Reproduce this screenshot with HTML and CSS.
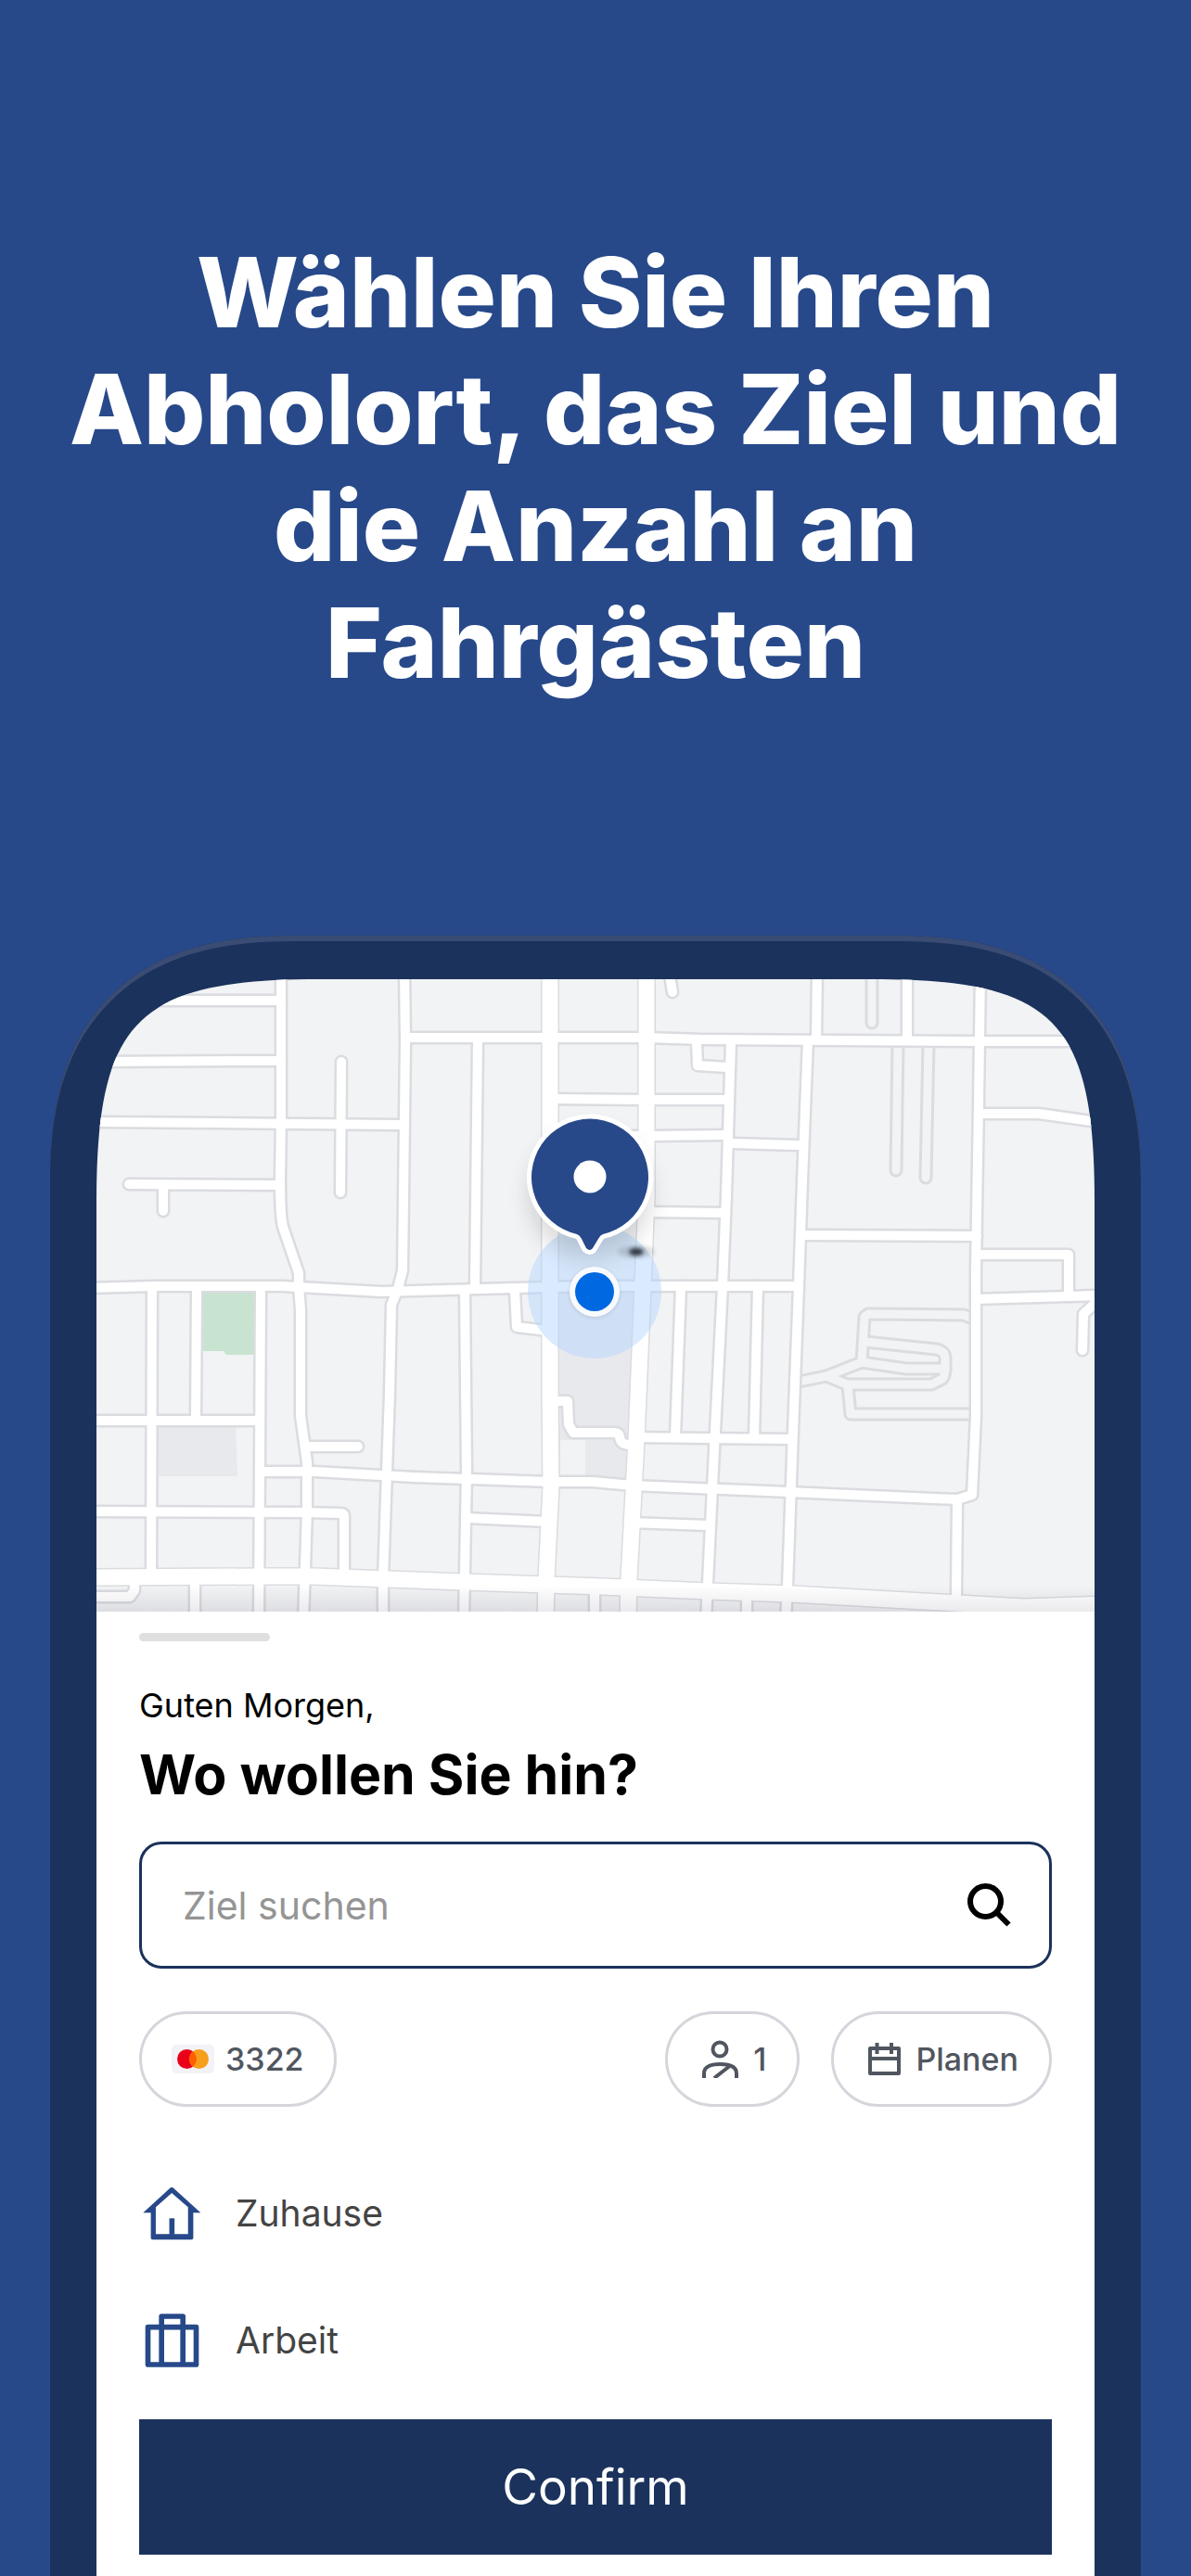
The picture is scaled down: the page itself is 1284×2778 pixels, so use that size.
FILE: index.html
```html
<!DOCTYPE html>
<html lang="de">
<head>
  <meta charset="utf-8">
  <meta name="viewport" content="width=device-width, initial-scale=1">
  <title>Wo wollen Sie hin?</title>
  <link rel="stylesheet" href="styles.css">
</head>
<body>
  <header class="hero">
    <h1 class="hero-title">Wählen Sie Ihren Abholort, das Ziel und die Anzahl an Fahrgästen</h1>
  </header>

  <main class="phone">
    <svg class="map" viewBox="0 0 1076 682" role="img" aria-label="Karte">
      <defs>
        <clipPath id="screen">
          <path d="M0 682V240C0 44 44 0 240 0H836C1032 0 1076 44 1076 240V682Z"/>
        </clipPath>
        <filter id="soft" x="-50%" y="-50%" width="200%" height="200%">
          <feGaussianBlur stdDeviation="2"/>
        </filter>
        <filter id="softer" x="-50%" y="-50%" width="200%" height="200%">
          <feGaussianBlur stdDeviation="12"/>
        </filter>
        <linearGradient id="edge" x1="0" y1="0" x2="0" y2="1">
          <stop offset="0" stop-color="#302040" stop-opacity="0"/>
          <stop offset="1" stop-color="#302040" stop-opacity=".1"/>
        </linearGradient>

        <!-- side streets -->
        <g id="streets">
          <path d="M199 -10V147L198 217Q198 255 201 267L218 317L218 331L220 357V471L227 521V571L225 634L223 692"/>
          <path d="M332 -10L333 67L331 234L330 314L325 334L318 351L316 447L313 531L309 647V692"/>
          <path d="M411 64L408 332M397 336L399 531L396 692"/>
          <path d="M684 67L679 234L675 331L665 527L659 651L657 692"/>
          <path d="M777 -10L776 66M767 66L761 217L757 331L750 514L745 654L743 692"/>
          <path d="M874 -10V64"/>
          <path d="M953 -10L951 134L948 314V471L944 556L928 561L927 664"/>
          <path d="M60 334L59 640M108 334L107 474M177 334L176 514L175 692M106 654V692"/>
          <path d="M-10 23H198M-10 89L149 88H198M-10 154L133 155L327 157"/>
          <path d="M333 63H489L593 63L654 65L955 67H1080"/>
          <path d="M489 129L593 130H681M489 169H593L676 168M686 177L757 179M593 251L678 252"/>
          <path d="M264 89L263 230M35 221L198 222M72 222V250"/>
          <path d="M647 67L648 93L680 95M617 -10L621 14"/>
          <path d="M761 276L949 277M951 145H1016L1080 154M951 297H1048V342"/>
          <path d="M-10 333L64 331H200L307 337L414 334L489 332L535 331H750"/>
          <path d="M948 345L1048 342L1080 341M1076 350L1064 361L1063 400"/>
          <path d="M630 331L624 494M713 331L709 494M582 494L750 496"/>
          <path d="M178 531H235L343 537L489 542H535L578 546L746 553L928 561"/>
          <path d="M575 586L660 589M451 336L453 375L486 379"/>
          <path d="M-10 476H173M228 504H282"/>
          <path d="M-10 574L225 575L264 576Q267 576 267 579V636M398 581L486 585"/>
          <path d="M496 455H508L509 480L514 489H558Q564 489 564 494Q565 502 575 502"/>
          <path d="M-10 666H36L41 659V650M537 660V692M701 664V692"/>
        </g>
        <!-- lanes drawn only as outlines -->
        <g id="lanes">
          <path d="M836 -10V47M864 69L862 206M897 69L894 214"/>
          <path d="M757 434L787 428L825 413L828 364L832 361L935 362L945 366"/>
          <path d="M829 391L905 399Q916 401 915 411V421Q914 430 912 431L900 437H809L787 428"/>
          <path d="M825 413L873 420H915M810 439L813 469H945"/>
        </g>
        <!-- main roads -->
        <g id="avenues">
          <path d="M489 -10V447L490 547L485 647L484 692"/>
          <path d="M593 -10V234L589 331L582 497L574 647L573 692"/>
          <path d="M-10 645L175 644H235L396 650L545 655L659 660L750 663L928 673L1000 677L1090 674"/>
        </g>
      </defs>

      <g clip-path="url(#screen)">
        <rect class="land" width="1076" height="682"/>
        <path class="park" d="M114 336H172L170 405H140L137 401H114Z"/>
        <path class="block" d="M67 482H150L152 536H67Z"/>
        <path class="block" d="M498 334H584L578 546L498 538Z"/>
        <path class="land" d="M500 497H527V536H500Z"/>

        <use href="#lanes" class="road lane-edge"/>
        <use href="#lanes" class="road lane-fill"/>
        <use href="#streets" class="road street-edge"/>
        <use href="#avenues" class="road avenue-edge"/>
        <use href="#streets" class="road street-fill"/>
        <use href="#avenues" class="road avenue-fill"/>

        <circle class="halo" cx="537" cy="337" r="72"/>
        <ellipse cx="532" cy="232" rx="66" ry="68" fill="#000" opacity=".14" filter="url(#softer)"/>
        <ellipse cx="582" cy="294" rx="20" ry="7" fill="#000" opacity=".12" filter="url(#soft)"/>
        <ellipse cx="582" cy="294" rx="8" ry="4" fill="#22262e" opacity=".9" filter="url(#soft)"/>
        <circle cx="537" cy="338" r="27" fill="#000" opacity=".12" filter="url(#soft)"/>
        <circle cx="537" cy="337" r="27" fill="#f8fafd"/>
        <circle cx="537" cy="337" r="21" fill="#0068e1"/>
        <path class="pin" d="M518 275A63 63 0 1 1 546 275Q543 276 541 280L535 290Q532 294 528 290L523 280Q521 276 518 275Z"/>
        <circle cx="532" cy="213" r="17.500" fill="#fff"/>
        <rect y="654" width="1076" height="28" fill="url(#edge)"/>
      </g>
    </svg>

    <section class="sheet">
      <div class="handle"></div>
      <p class="greeting">Guten Morgen,</p>
      <h2 class="question">Wo wollen Sie hin?</h2>

      <form class="search">
        <input class="search-input" type="text" placeholder="Ziel suchen" aria-label="Ziel suchen">
        <button class="search-button" type="button" aria-label="Suchen">
          <svg width="47" height="47" viewBox="0 0 47 47" fill="none" stroke="#000" stroke-width="6">
            <circle cx="19.500" cy="19.500" r="16.500"/>
            <path d="M31 31L44.500 44.500"/>
          </svg>
        </button>
      </form>

      <div class="chips">
        <button class="chip chip-card" type="button">
          <svg width="46" height="31" viewBox="0 0 46 31">
            <rect width="46" height="31" rx="5" fill="#f2f3f6"/>
            <circle cx="16.500" cy="15.500" r="10.500" fill="#eb001b"/>
            <circle cx="29.500" cy="15.500" r="10.500" fill="#f79e1b"/>
            <path d="M23 7.300A10.500 10.500 0 0 1 23 23.700A10.500 10.500 0 0 1 23 7.300Z" fill="#ff5f00"/>
          </svg>
          3322
        </button>
        <button class="chip" type="button">
          <svg width="39" height="41" viewBox="0 0 39 41" fill="none" stroke="#50565f" stroke-width="4">
            <circle cx="19" cy="10" r="7.500"/>
            <path d="M2 41V36C2 29 8 26 19.300 26C31 26 37 29 37 36V41M13 41L31 27"/>
          </svg>
          1
        </button>
        <button class="chip" type="button">
          <svg width="35" height="35" viewBox="0 0 35 35" fill="none" stroke="#50565f" stroke-width="4" stroke-linejoin="round">
            <path d="M2 6H33V33H2ZM2 17H33M9.500 0V12M25 0V12"/>
          </svg>
          Planen
        </button>
      </div>

      <ul class="places">
        <li>
          <a class="place" href="#">
            <svg width="63" height="58" viewBox="0 0 190 174" fill="#27498a">
              <path fill-rule="evenodd" d="M89 4Q94 0 99 4L188 85H164V166Q164 172 158 172H32Q26 172 26 166V85H1ZM42 67V154H147V67L94 21Z"/>
              <path d="M86 103H103V156H86Z"/>
            </svg>
            Zuhause
          </a>
        </li>
        <li>
          <a class="place" href="#">
            <svg width="63" height="58" viewBox="-8 0 188 174" fill="none" stroke="#27498a" stroke-width="17" stroke-linejoin="round">
              <path d="M8 44H164V165H8ZM52 165V9H121V165"/>
            </svg>
            Arbeit
          </a>
        </li>
      </ul>

      <button class="confirm" type="button">Confirm</button>
    </section>
  </main>
</body>
</html>
```
FILE: styles.css
```css
* {
  box-sizing: border-box;
}

body {
  margin: 0;
  min-height: 100vh;
  display: flex;
  flex-direction: column;
  font-family: Inter, "Liberation Sans", sans-serif;
  background-color: #27498a;
  color: #000;
}

button,
input {
  font-family: inherit;
}

/* Headline */
.hero {
  padding: 252px 60px 253px;
}

.hero-title {
  margin: 0;
  font-size: 104px;
  font-weight: 800;
  line-height: 126px;
  text-align: center;
  color: #fff;
}

/* Phone */
.phone {
  flex: 1;
  display: flex;
  flex-direction: column;
  margin: 0 54px;
  padding: 47px 50px 0;
  border-radius: 228px 228px 0 0;
  background-color: #1b325c;
  box-shadow: inset 0 6px 0 #3a4c73;
}

@supports (corner-shape: superellipse(1.3)) {
  .phone {
    border-radius: 265px 265px 0 0;
    corner-shape: superellipse(1.3);
  }
}

.map {
  display: block;
  width: 100%;
}

.land {
  fill: #f1f3f4;
}

.park {
  fill: #c8e4d0;
}

.block {
  fill: #e8e9ed;
}

.road {
  fill: none;
  stroke-linecap: round;
  stroke-linejoin: round;
}

.lane-edge,
.street-edge {
  stroke: #dadce0;
  stroke-width: 15px;
}

.lane-fill {
  stroke: #f1f3f4;
  stroke-width: 9px;
}

.street-fill {
  stroke: #fff;
  stroke-width: 10px;
}

.avenue-edge {
  stroke: #dadce0;
  stroke-width: 20px;
}

.avenue-fill {
  stroke: #fff;
  stroke-width: 17px;
}

.halo {
  fill: #b4d5ff;
  fill-opacity: .48;
}

.pin {
  fill: #27498a;
  stroke: #fff;
  stroke-width: 10px;
  stroke-linejoin: round;
  paint-order: stroke;
}

/* Bottom sheet */
.sheet {
  flex: 1;
  padding: 23px 46px;
  background-color: #fff;
}

.handle {
  width: 141px;
  height: 9px;
  border-radius: 5px;
  background-color: #dfdfdf;
}

.greeting {
  margin: 46px 0 0;
  font-size: 36px;
  line-height: 46px;
}

.question {
  margin: 15px 0 0;
  font-size: 59px;
  font-weight: 700;
  line-height: 74px;
}

.search {
  display: flex;
  align-items: center;
  height: 137px;
  margin-top: 35px;
  padding: 0 41px 0 44px;
  border: 3px solid #1b325c;
  border-radius: 24px;
}

.search-input {
  flex: 1;
  min-width: 0;
  padding: 0;
  border: 0;
  outline: 0;
  font-size: 41px;
  background: none;
}

.search-input::placeholder {
  color: #959595;
}

.search-button {
  display: flex;
  padding: 0;
  border: 0;
  background: none;
}

/* Chips */
.chips {
  display: flex;
  gap: 34px;
  margin-top: 46px;
}

.chip {
  display: flex;
  align-items: center;
  gap: 16px;
  height: 103px;
  padding: 0 33px 0 37px;
  border: 3px solid #d5d6db;
  border-radius: 52px;
  font-size: 34px;
  font-weight: 500;
  color: #50565f;
  background: none;
}

.chip-card {
  gap: 12px;
  margin-right: auto;
  padding: 0 32px;
}

/* Saved places */
.places {
  margin: 46px 0 0;
  padding: 0;
  list-style: none;
}

.place {
  display: flex;
  align-items: center;
  gap: 37px;
  height: 137px;
  padding-left: 4px;
  font-size: 39px;
  text-decoration: none;
  color: #444;
}

.confirm {
  display: block;
  width: 100%;
  height: 146px;
  margin-top: 17px;
  border: 0;
  font-size: 53px;
  color: #fff;
  background-color: #1b325c;
}
```
